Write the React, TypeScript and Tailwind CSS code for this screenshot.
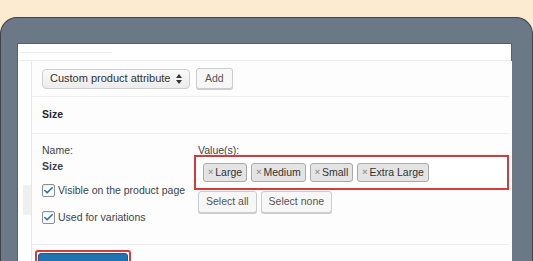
import { Check } from 'lucide-react'

const font = { fontFamily: '"Liberation Sans", Arial, sans-serif' }

function Box({ label }: { label: string }) {
  return (
    <label className="flex items-center gap-[3px] text-[10.5px] text-[#3c434a]">
      <span className="grid h-[13px] w-[13px] place-items-center rounded-[2px] border border-[#8c8f94] bg-white shadow-[inset_0_1px_2px_rgba(0,0,0,0.1)]">
        <Check size={11} strokeWidth={3.5} className="text-[#2271b1]" />
      </span>
      {label}
    </label>
  )
}

function Tag({ label }: { label: string }) {
  return (
    <span className="flex h-[19px] items-center gap-[2px] rounded-[3px] border border-[#aaa] bg-[#e4e4e4] px-[4px] text-[10.5px] text-[#333]">
      <span className="text-[9px] font-bold text-[#999]">×</span>
      {label}
    </span>
  )
}

function Btn({ label }: { label: string }) {
  return (
    <button className="h-[22px] rounded-[3px] border border-[#ccc] bg-[#f7f7f7] px-[7px] text-[10.5px] text-[#555] shadow-[0_1px_0_#ccc]">
      {label}
    </button>
  )
}

export default function App() {
  return (
    <div style={font} className="h-[261px] w-[533px] overflow-hidden bg-[#fdebd1] pt-[17px]">
      {/* laptop frame */}
      <div className="flex h-[260px] flex-col rounded-t-[17px] border-x border-t border-[#3c454e] bg-[#6b7886] pl-[16px] pr-[20px] pt-[25px]">
        <div className="flex flex-1 flex-col border-l border-r border-t border-[#56616c] bg-white">
          {/* top strip */}
          <div className="h-[17px] border-b border-[#ececec] pt-[8px]">
            <div className="ml-[2px] w-[92px] border-b border-[#eee]" />
          </div>
          <div className="flex flex-1">
            {/* left tabs strip */}
            <div className="w-[14px] border-r border-[#e6e6e6] pl-[5px] pt-[124px]">
              <div className="h-[30px] w-[8px] bg-[#efefef]" />
            </div>
            {/* panel */}
            <div className="flex flex-1 flex-col bg-[#fdfdfe] pr-[3px]">
              <div className="flex h-[36px] items-center gap-[6px] border-b border-[#eee] pl-[10px]">
                <div className="flex h-[20px] w-[148px] items-center justify-between rounded-[4px] border border-[#cfcfcf] bg-gradient-to-b from-[#fafafa] to-[#ececec] pl-[7px] pr-[7px] text-[11px] text-[#333]">
                  <span>Custom product attribute</span>
                  <svg width="6" height="10" viewBox="0 0 6 10">
                    <path d="M0 4 L3 0 L6 4 Z M0 6 L3 10 L6 6 Z" fill="#333" />
                  </svg>
                </div>
                <button className="h-[21px] rounded-[3px] border border-[#ccc] bg-[#f7f7f7] px-[8px] text-[10.5px] text-[#555] shadow-[0_1px_0_#ccc]">
                  Add
                </button>
              </div>
              <div className="flex h-[37px] items-center border-b border-[#eee] pl-[10px] text-[10.5px] font-bold text-[#23282d]">
                Size
              </div>
              <div className="flex h-[111px] border-b border-[#eee] pl-[10px] pt-[9px]">
                <div className="flex w-[152px] flex-col">
                  <div className="text-[10.5px] leading-[14px] text-[#3c434a]">Name:</div>
                  <div className="mt-[2px] text-[10.5px] font-bold leading-[14px] text-[#3c434a]">Size</div>
                  <div className="mt-[10px] flex flex-col gap-[11px]">
                    <Box label="Visible on the product page" />
                    <Box label="Used for variations" />
                  </div>
                </div>
                <div className="flex flex-1 flex-col">
                  <div className="pl-[4px] text-[10.5px] leading-[14px] text-[#3c434a]">Value(s):</div>
                  <div className="-mt-[2px] flex h-[35px] w-[315px] items-center gap-[4px] border-2 border-[#d23c3c] bg-white pl-[7px]">
                    <Tag label="Large" />
                    <Tag label="Medium" />
                    <Tag label="Small" />
                    <Tag label="Extra Large" />
                  </div>
                  <div className="mt-[1px] flex gap-[4px] pl-[4px]">
                    <Btn label="Select all" />
                    <Btn label="Select none" />
                  </div>
                </div>
              </div>
              <div className="pl-[6px] pt-[5px]">
                <div className="-ml-[3px] inline-block rounded-[3px] border-2 border-[#d23c3c] p-[1px]">
                  <button className="h-[26px] rounded-[3px] border border-[#135e96] bg-[#2271b1] px-[9px] text-[10.5px] leading-[12px] text-white">
                    Save attributes
                  </button>
                </div>
              </div>
            </div>
          </div>
        </div>
      </div>
    </div>
  )
}
